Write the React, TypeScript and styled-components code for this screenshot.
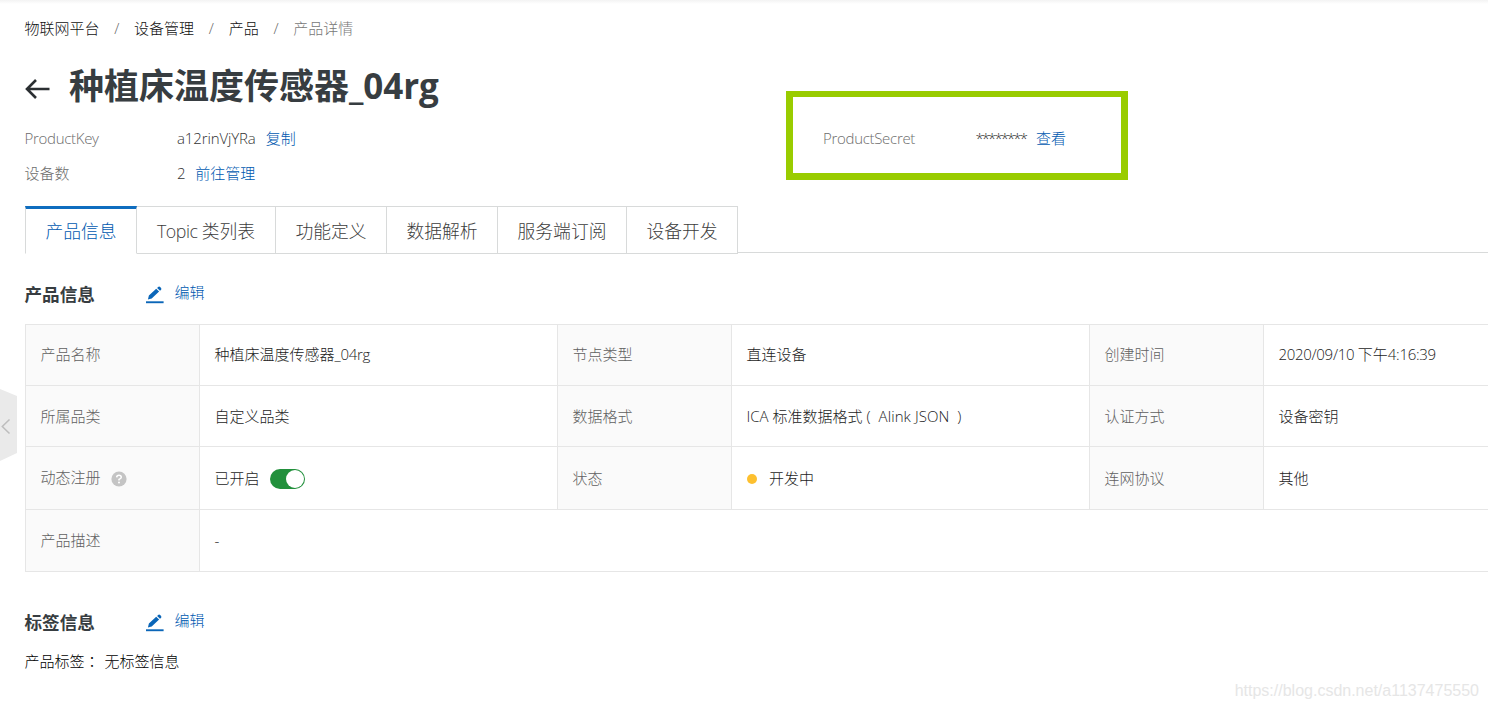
import React from "react";
import styled, { createGlobalStyle } from "styled-components";

const GlobalStyle = createGlobalStyle`
  * { box-sizing: border-box; }
  body {
    margin: 0;
    background: #fff;
    overflow: hidden;
    font-family: "Open Sans", "Noto Sans CJK SC", sans-serif;
    font-size: 15px;
    font-weight: 300;
    line-height: 20px;
    color: #222;
    white-space: nowrap;
  }
`;

const Page = styled.div`
  position: relative;
  width: 100%;
  height: 709px;
  padding-left: 24.5px;
  overflow: hidden;
  background: linear-gradient(#f3f3f3, #fff) top / 100% 4px no-repeat #fff;
`;

const Breadcrumb = styled.nav`
  display: flex;
  height: 56px;
  align-items: center;
`;

const Crumb = styled.span<{ $current?: boolean }>`
  color: ${(p) => (p.$current ? "#777" : "#111")};
`;

const Slash = styled.span`
  width: 34.6px;
  text-align: center;
  color: #666;
`;

const Latin = styled.span<{ $spacing?: number }>`
  letter-spacing: ${(p) => p.$spacing ?? -0.3}px;
`;

const TitleRow = styled.header`
  display: flex;
  align-items: center;
  height: 60px;
`;

const BackIcon = styled.svg`
  width: 25px;
  height: 22px;
  margin: 6px 19.5px 0 0;
`;

const Title = styled.h1`
  margin: 0;
  font-size: 35px;
  line-height: 50px;
  font-weight: 700;
  color: #373d41;
`;

const InfoGrid = styled.section`
  display: grid;
  grid-template-columns: 798.5px 1fr;
  grid-template-rows: 35px 35px;
  margin-top: 4px;
`;

const InfoItem = styled.div`
  display: flex;
  align-items: center;
  color: #333;
`;

const InfoLabel = styled.span`
  width: 152.5px;
  color: #6c6c6c;
`;

const Link = styled.a`
  margin-left: 10px;
  color: #0059b0;
`;

const Highlight = styled.div`
  position: absolute;
  left: 786px;
  top: 91px;
  width: 342px;
  height: 89px;
  border: 7px solid #9c0;
  border-top-width: 6.5px;
`;

const TabBar = styled.div`
  display: flex;
  height: 48px;
  margin: 16px 0 0 0.5px;
`;

const Tab = styled.div<{ $width: number; $active?: boolean }>`
  width: ${(p) => p.$width}px;
  border: 1px solid #d8dada;
  border-left-width: ${(p) => (p.$active ? 1 : 0)}px;
  border-top: ${(p) => (p.$active ? "3px solid #0f6dbf" : "1px solid #d8dada")};
  border-bottom-color: ${(p) => (p.$active ? "#fff" : "#d8dada")};
  padding-top: ${(p) => (p.$active ? 9 : 11)}px;
  text-align: center;
  font-size: 17.8px;
  line-height: 26px;
  color: ${(p) => (p.$active ? "#0059b0" : "#3c3c3c")};
`;

const TabRule = styled.div`
  flex: 1;
  height: 47px;
  border-bottom: 1px solid #d8dada;
`;

const SectionHead = styled.div<{ $top: number }>`
  display: flex;
  align-items: center;
  height: 26px;
  margin-top: ${(p) => p.$top}px;
`;

const SectionTitle = styled.h2`
  width: 121px;
  margin: 0;
  font-size: 17.6px;
  line-height: 26px;
  font-weight: 700;
  color: #373d41;
`;

const EditLink = styled.a`
  display: flex;
  align-items: center;
  gap: 11px;
  color: #0059b0;
  svg { margin-top: 2px; }
  span { margin-top: -4px; }
`;

const Table = styled.div`
  display: grid;
  width: 1464px;
  height: 248px;
  margin: 17px 0 0 0.5px;
  border-top: 1px solid #e6e6e6;
  border-left: 1px solid #e6e6e6;
  grid-template-columns: 174px 358px 174px 358px 174px 225px;
  grid-template-rows: 61px 61px 63px 62px;
`;

const Cell = styled.div<{ $label?: boolean; $wide?: boolean; $lift?: boolean }>`
  display: flex;
  align-items: center;
  padding-left: 14.5px;
  padding-bottom: ${(p) => (p.$lift ? 2 : 0)}px;
  border-right: 1px solid #e6e6e6;
  border-bottom: 1px solid #e6e6e6;
  background: ${(p) => (p.$label ? "#fafafa" : "#fff")};
  color: ${(p) => (p.$label ? "#606060" : "#1c1c1c")};
  grid-column: ${(p) => (p.$wide ? "span 5" : "auto")};
`;

const HelpIcon = styled.svg`
  margin: 3px 0 0 10px;
`;

const Toggle = styled.span`
  display: flex;
  justify-content: flex-end;
  width: 35px;
  height: 20px;
  margin: 2px 0 0 10.5px;
  padding: 1px;
  border-radius: 10px;
  background: #22903c;
`;

const Knob = styled.span`
  width: 18px;
  height: 18px;
  border-radius: 50%;
  background: #fff;
`;

const StatusDot = styled.span`
  width: 10px;
  height: 10px;
  margin: 1px 12px 0 0.5px;
  border-radius: 50%;
  background: #fdc02f;
`;

const TagRow = styled.div`
  margin-top: 16px;
  color: #000;
`;

const Colon = styled.span`
  font-family: "Noto Sans CJK TC", sans-serif;
`;

const TagValue = styled.span`
  margin-left: 5px;
`;

const SideHandle = styled.svg`
  position: absolute;
  left: 0;
  top: 389px;
`;

const Watermark = styled.div`
  position: absolute;
  right: 9px;
  bottom: 8px;
  font-family: "Liberation Sans", sans-serif;
  font-size: 16px;
  font-weight: 400;
  color: #e6e6e6;
`;

const Edit = () => (
  <EditLink>
    <svg width="18" height="18" viewBox="0 0 18 18" fill="#0b66b8">
      <path d="M0 15.300h17.600v1.900H0z" />
      <path d="M1.900 13.400l1-3.900 7.300-6.800 2.900 2.900-7.400 6.900zM11.100 1.900l1-.9q1.100-.9 2.100.1l.8.800q1 1-.1 2l-.9.900z" />
    </svg>
    <span>编辑</span>
  </EditLink>
);

const tabs: { node: React.ReactNode; width: number }[] = [
  { node: "产品信息", width: 112 },
  { node: <><Latin $spacing={-0.45}>Topic </Latin>类列表</>, width: 139 },
  { node: "功能定义", width: 111 },
  { node: "数据解析", width: 111 },
  { node: "服务端订阅", width: 129 },
  { node: "设备开发", width: 111 },
];

export default function App() {
  return (
    <Page>
      <GlobalStyle />
      <Breadcrumb>
        <Crumb>物联网平台</Crumb>
        <Slash>/</Slash>
        <Crumb>设备管理</Crumb>
        <Slash>/</Slash>
        <Crumb>产品</Crumb>
        <Slash>/</Slash>
        <Crumb $current>产品详情</Crumb>
      </Breadcrumb>
      <TitleRow>
        <BackIcon viewBox="0 0 25 22" fill="none" stroke="#2b2f32" strokeWidth="2.6">
          <path d="M24.5 11H2M11 2L2 11l9 9" />
        </BackIcon>
        <Title>种植床温度传感器<Latin $spacing={-0.1}>_04rg</Latin></Title>
      </TitleRow>
      <InfoGrid>
        <InfoItem>
          <InfoLabel><Latin>ProductKey</Latin></InfoLabel>
          <Latin $spacing={-0.12}>a12rinVjYRa</Latin>
          <Link>复制</Link>
        </InfoItem>
        <InfoItem>
          <InfoLabel><Latin>ProductSecret</Latin></InfoLabel>
          <Latin $spacing={-1.95}>********</Latin>
          <Link>查看</Link>
        </InfoItem>
        <InfoItem>
          <InfoLabel>设备数</InfoLabel>
          <Latin>2</Latin>
          <Link>前往管理</Link>
        </InfoItem>
      </InfoGrid>
      <Highlight />
      <TabBar>
        {tabs.map((tab, i) => (
          <Tab key={i} $width={tab.width} $active={i === 0}>{tab.node}</Tab>
        ))}
        <TabRule />
      </TabBar>
      <SectionHead $top={27}>
        <SectionTitle>产品信息</SectionTitle>
        <Edit />
      </SectionHead>
      <Table>
        <Cell $label $lift>产品名称</Cell>
        <Cell $lift>种植床温度传感器<Latin>_04rg</Latin></Cell>
        <Cell $label $lift>节点类型</Cell>
        <Cell $lift>直连设备</Cell>
        <Cell $label $lift>创建时间</Cell>
        <Cell $lift><Latin>2020/09/10&nbsp;</Latin>下午<Latin>4:16:39</Latin></Cell>

        <Cell $label>所属品类</Cell>
        <Cell>自定义品类</Cell>
        <Cell $label>数据格式</Cell>
        <Cell>
          <Latin $spacing={0}>ICA&nbsp;</Latin>标准数据格式
          <Latin $spacing={0.08}>&nbsp;(&nbsp; Alink JSON&nbsp; )</Latin>
        </Cell>
        <Cell $label>认证方式</Cell>
        <Cell>设备密钥</Cell>

        <Cell $label $lift>
          动态注册
          <HelpIcon width="16" height="16" viewBox="0 0 16 16">
            <circle cx="8" cy="8" r="7.6" fill="#c4c4c4" />
            <path d="M5.7 6.4Q5.8 4.3 8 4.3t2.3 1.9Q10.3 7.300 8 8.400V9.600" fill="none" stroke="#fff" strokeWidth="1.5" />
            <circle cx="8" cy="11.500" r="1" fill="#fff" />
          </HelpIcon>
        </Cell>
        <Cell>已开启<Toggle><Knob /></Toggle></Cell>
        <Cell $label>状态</Cell>
        <Cell><StatusDot />开发中</Cell>
        <Cell $label>连网协议</Cell>
        <Cell>其他</Cell>

        <Cell $label $lift>产品描述</Cell>
        <Cell $wide $lift>-</Cell>
      </Table>
      <SectionHead $top={37}>
        <SectionTitle>标签信息</SectionTitle>
        <Edit />
      </SectionHead>
      <TagRow>产品标签<Colon>：</Colon><TagValue>无标签信息</TagValue></TagRow>
      <SideHandle width="17" height="72" viewBox="0 0 17 72">
        <path d="M0 0l17 7v57L0 72z" fill="#eaeaea" />
        <path d="M9.500 30.500L2.300 37.500l7.200 7" fill="none" stroke="#bdbdbd" strokeWidth="1.500" />
      </SideHandle>
      <Watermark>https://blog.csdn.net/a1137475550</Watermark>
    </Page>
  );
}
